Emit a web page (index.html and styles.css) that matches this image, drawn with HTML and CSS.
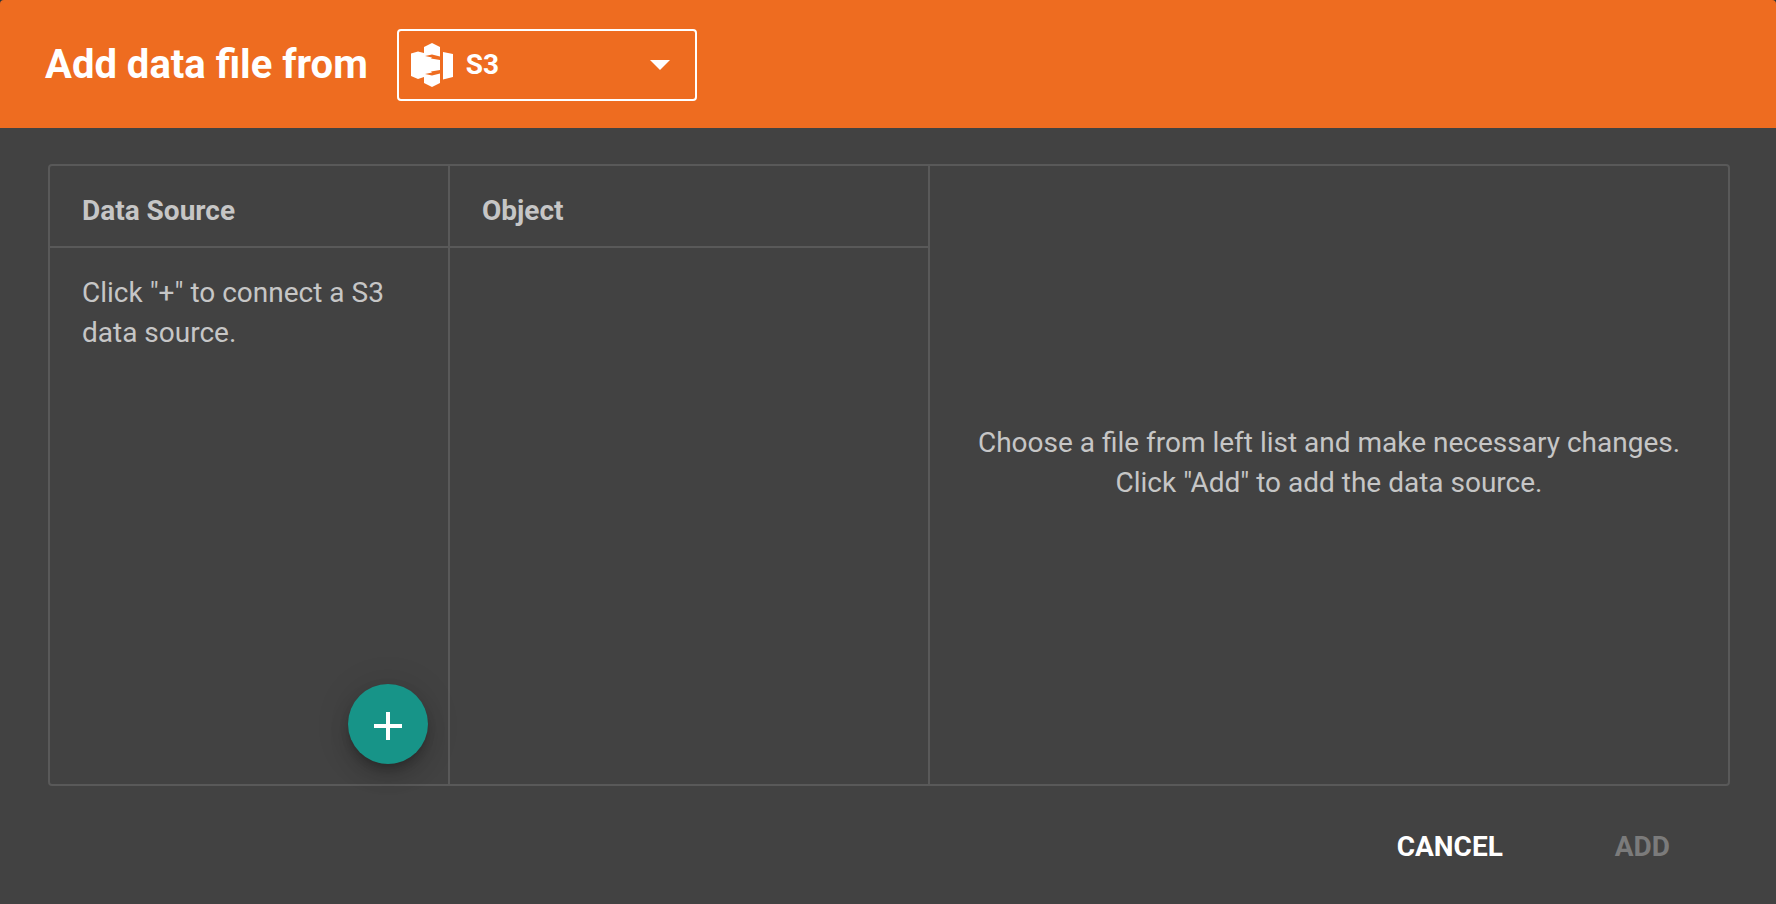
FILE: index.html
```html
<!DOCTYPE html>
<html lang="en">
<head>
<meta charset="utf-8">
<meta name="viewport" content="width=device-width, initial-scale=1">
<title>Add data file</title>
<link rel="stylesheet" href="styles.css">
</head>
<body>
<main class="dialog">
  <header class="dialog-header">
    <h1 class="dialog-title"><label for="source">Add data file from</label></h1>
    <div class="source-picker">
      <select id="source" class="source-select">
        <option selected>S3</option>
      </select>
      <svg class="source-icon" viewBox="0 0 42 44" aria-hidden="true">
        <path d="M0 10.500 7 8.500 13 10V4L21 0 29 4V13.500L21 11.500 14 13 21 14.500 20 15.500 29 17V27L20 28.500 21 29.500 14 31 21 32.500 29 30.500V40L21 44 13 40V34L7 36 0 33Z"/>
        <path d="M32 9 42 11V34L32 36.500Z"/>
      </svg>
      <svg class="source-caret" viewBox="0 0 20 10" aria-hidden="true"><path d="M0 0H20L10 10Z"/></svg>
    </div>
  </header>
  <div class="browser">
    <section class="column">
      <h2 class="column-title">Data Source</h2>
      <p class="column-hint">Click "+" to connect a S3 data source.</p>
      <button class="fab" type="button" aria-label="Connect a data source">
        <svg class="fab-icon" viewBox="0 0 28 28" aria-hidden="true"><path d="M12 0H16V12H28V16H16V28H12V16H0V12H12Z"/></svg>
      </button>
    </section>
    <section class="column">
      <h2 class="column-title">Object</h2>
    </section>
    <section class="details">
      <p class="details-hint">Choose a file from left list and make necessary changes.<br>Click "Add" to add the data source.</p>
    </section>
  </div>
  <footer class="dialog-actions">
    <button class="action" type="button">CANCEL</button>
    <button class="action" type="button" disabled>ADD</button>
  </footer>
</main>
</body>
</html>
```
FILE: styles.css
```css
* {
  box-sizing: border-box;
}

body {
  margin: 0;
  background: #2b3436;
  color: #c6c6c6;
  font: 400 28px/40px Roboto, "Liberation Sans", sans-serif;
}

h1, h2, p {
  margin: 0;
}

.dialog {
  display: flex;
  flex-direction: column;
  min-height: 100vh;
  overflow: hidden;
  border-radius: 4px 4px 0 0;
  background: #424242;
}

.dialog-header {
  display: flex;
  align-items: center;
  gap: 29px;
  padding: 29px 45px 27px;
  background: #ee6c20;
  color: #fff;
}

.dialog-title {
  font-size: 40px;
  font-weight: 700;
  line-height: 72px;
}

.source-picker {
  display: grid;
  grid-template-columns: 300px;
  align-items: center;
}

.source-picker > * {
  grid-area: 1 / 1;
}

.source-select {
  width: 100%;
  height: 72px;
  padding: 0 67px;
  border: 2px solid #fff;
  border-radius: 4px;
  background: transparent;
  color: #fff;
  font: inherit;
  font-weight: 700;
  appearance: none;
}

.source-icon,
.source-caret {
  fill: #fff;
  pointer-events: none;
}

.source-icon {
  width: 42px;
  margin-left: 14px;
}

.source-caret {
  justify-self: end;
  width: 20px;
  margin-right: 27px;
}

.browser {
  display: grid;
  flex: 1;
  grid-template-columns: 400px 480px 1fr;
  margin: 36px 46px 0 48px;
  border: 2px solid #595959;
  border-radius: 4px;
}

.column {
  display: flex;
  flex-direction: column;
  border-right: 2px solid #595959;
}

.column-title {
  padding: 25px 32px 15px;
  border-bottom: 2px solid #595959;
  font-size: 28px;
  font-weight: 700;
}

.column-hint {
  padding: 25px 32px;
}

.fab {
  display: grid;
  place-items: center;
  width: 80px;
  height: 80px;
  margin: auto 20px 20px auto;
  padding: 4px 0 0;
  border: 0;
  border-radius: 50%;
  background: #179488;
  box-shadow: 0 6px 10px -2px rgba(0, 0, 0, 0.2), 0 12px 20px rgba(0, 0, 0, 0.14), 0 2px 36px rgba(0, 0, 0, 0.12);
}

.fab-icon {
  width: 28px;
  fill: #fff;
}

.details {
  display: grid;
  place-items: center;
  padding: 0 32px 24px;
  text-align: center;
}

.dialog-actions {
  display: flex;
  justify-content: flex-end;
  gap: 48px;
  padding: 25px 74px 21px;
}

.action {
  height: 72px;
  padding: 0 32px;
  border: 0;
  background: transparent;
  color: #fff;
  font: inherit;
  font-weight: 700;
}

.action:disabled {
  color: #7b7b7b;
}
```
